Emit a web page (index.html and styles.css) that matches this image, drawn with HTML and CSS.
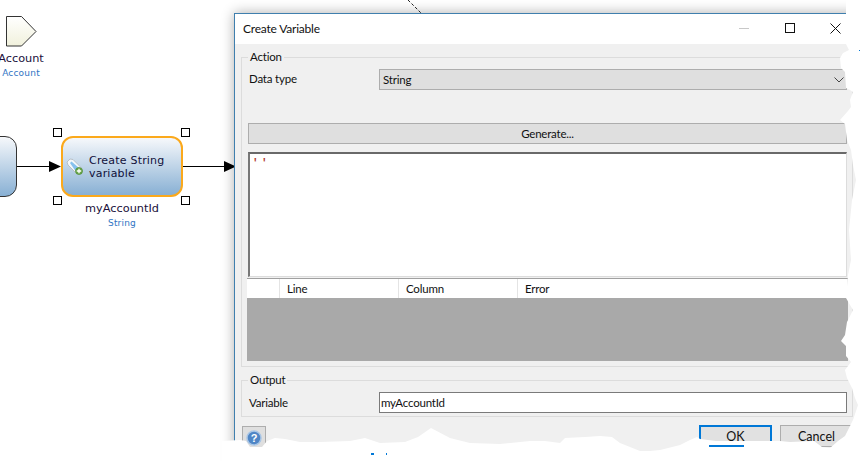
FILE: index.html
```html
<!DOCTYPE html>
<html lang="en">
<head>
<meta charset="utf-8">
<title>Create Variable</title>
<link rel="stylesheet" href="styles.css">
</head>
<body>
<main class="canvas">
  <svg class="wires" width="867" height="461" viewBox="0 0 867 461" aria-hidden="true">
    <defs>
      <linearGradient id="paleFill" x1="0" y1="0" x2="0" y2="1">
        <stop offset="0" stop-color="#ffffff"/><stop offset="1" stop-color="#f1f1dc"/>
      </linearGradient>
    </defs>
    <path d="M6.500 16.500H21.500L36 31.500L21.500 46H6.500Z" fill="url(#paleFill)" stroke="#333"/>
    <path d="M16 166.500H50M182 166.500H225" fill="none" stroke="#000"/>
    <path d="M49 161L61 166.500L49 172ZM224 161L236 166.500L224 172Z" fill="#000"/>
    <path d="M408 0L421 13" fill="none" stroke="#222" stroke-dasharray="3 2"/>
  </svg>

  <div class="node node-prev"></div>
  <div class="node node-current">
    <svg class="tag" width="18" height="18" viewBox="0 0 18 18" aria-hidden="true">
      <path d="M1 4L4 1L7 1.500L15 9.500L10 15L2 7Z" fill="#f4f7fa" stroke="#aeb6bd" stroke-width=".8"/>
      <path d="M4 5L5.500 3.500L13 10L9.500 13Z" fill="#86c1ee"/>
      <circle cx="13" cy="13" r="3.500" fill="#6aa84a" stroke="#4d8a34" stroke-width=".7"/>
      <path d="M13 10.800V15.200M10.800 13H15.200" stroke="#fff" stroke-width="1.300"/>
    </svg>
    <span class="node-label">Create String<br>variable</span>
  </div>
  <span class="handle h-tl"></span>
  <span class="handle h-tr"></span>
  <span class="handle h-bl"></span>
  <span class="handle h-br"></span>

  <div class="caption cap-account"><span class="cap-name">Account</span><span class="cap-type">Account</span></div>
  <div class="caption cap-var"><span class="cap-name">myAccountId</span><span class="cap-type">String</span></div>

  <section class="dialog">
    <header class="titlebar">
      <h1 class="title">Create Variable</h1>
      <div class="win-controls">
        <span class="win-min"></span>
        <span class="win-max"></span>
        <svg class="win-close" width="11" height="11" viewBox="0 0 11 11" aria-hidden="true"><path d="M.5 .5L10.500 10.500M10.500 .5L.5 10.500" stroke="#111" stroke-width="1"/></svg>
      </div>
    </header>
    <div class="dialog-body">
      <fieldset class="group group-action">
        <legend class="group-title">Action</legend>
        <div class="field-row">
          <label class="field-label">Data type</label>
          <div class="select">String
            <svg class="chev" width="10" height="6" viewBox="0 0 10 6" aria-hidden="true"><path d="M.5 .5L5 5L9.500 .5" fill="none" stroke="#444"/></svg>
          </div>
        </div>
        <button class="generate" type="button">Generate...</button>
        <div class="editor"><span class="quote">''</span></div>
        <div class="grid">
          <div class="grid-head">
            <span class="col col-0"></span>
            <span class="col col-line">Line</span>
            <span class="col col-column">Column</span>
            <span class="col col-error">Error</span>
          </div>
          <div class="grid-empty"></div>
        </div>
      </fieldset>
      <fieldset class="group group-output">
        <legend class="group-title">Output</legend>
        <div class="field-row">
          <label class="field-label">Variable</label>
          <div class="input">myAccountId</div>
        </div>
      </fieldset>
      <footer class="footer">
        <button class="help" type="button" aria-label="Help">
          <svg width="18" height="18" viewBox="0 0 18 18" aria-hidden="true">
            <circle cx="9" cy="9" r="7" fill="#4f86c6" stroke="#a9c6e6" stroke-width="1.500"/>
            <text x="9" y="13" class="help-mark">?</text>
          </svg>
        </button>
        <div class="actions">
          <button class="btn btn-ok" type="button">OK</button>
          <button class="btn" type="button">Cancel</button>
        </div>
      </footer>
    </div>
  </section>

  <svg class="tear" width="867" height="461" viewBox="0 0 867 461" aria-hidden="true">
    <path fill="#fff" d="M846 0L846 44L849 50L843 53L840 58L841 68L845 72L846 88L850 90L853 92L850 100L851 107L848 111L840 120L845 124L847 140L851 150L853 165L856 180L852 200L849 230L851 260L848 275L846 298L853 310L847 322L845 335L841 341L846 346L846 356L851 362L845 370L847 378L852 388L855 398L858 405L853 420L849 428L845 436L838 441L830 448L822 447L814 441L790 442L780 441L770 441L745 441L716 441L700 439L697 437L690 440L680 445L660 450L650 451L640 451L630 447L620 443L612 437L600 436L585 437L565 438L560 443L545 441L530 441L500 444L470 443L450 438L431 428L418 437L405 442L380 443L365 438L350 441L320 442L300 442L285 439L275 438L267 441L262 447L250 447L246 441L240 440L222 441L222 461L867 461L867 0Z"/>
    <path fill="#0078d7" d="M859 50h1v1h-1zM371 453h3v2h-3zM386 453h1v2h-1zM709 445h35v2h-35z"/>
  </svg>
</main>
</body>
</html>
```
FILE: styles.css
```css
* { box-sizing: border-box; }
html, body { margin: 0; padding: 0; background: #fff; }
.canvas {
  position: relative;
  width: 867px;
  height: 461px;
  overflow: hidden;
  font-family: "Lato", "Open Sans", sans-serif;
  font-size: 11.500px;
  letter-spacing: -.2px;
  color: #111;
}
.wires { position: absolute; left: 0; top: 0; }
.node {
  position: absolute;
  top: 136px;
  height: 61px;
  border-radius: 12px;
  background: linear-gradient(#f6f8fb, #88b0d4);
}
.node-prev { left: -60px; width: 77px; border: 1px solid #333; }
.node-current {
  left: 61px;
  width: 122px;
  border: 2px solid #fba91c;
  display: flex;
  align-items: center;
  padding-left: 3px;
  gap: 5px;
}
.node-label {
  font-family: "DejaVu Sans", sans-serif;
  font-size: 11px;
  letter-spacing: .2px;
  line-height: 13px;
  color: #10103a;
}
.tag { flex: none; }
.handle {
  position: absolute;
  width: 9px;
  height: 9px;
  border: 1px solid #000;
  background: #fff;
}
.h-tl { left: 53px; top: 128px; }
.h-tr { left: 181px; top: 128px; }
.h-bl { left: 53px; top: 196px; }
.h-br { left: 181px; top: 196px; }
.caption {
  position: absolute;
  display: flex;
  flex-direction: column;
  align-items: center;
  font-family: "DejaVu Sans", sans-serif;
  letter-spacing: 0;
  white-space: nowrap;
}
.cap-account { left: -9px; width: 60px; top: 52px; }
.cap-var { left: 82px; width: 80px; top: 202px; }
.cap-name { font-size: 11.300px; line-height: 14px; color: #20103a; }
.cap-type { font-size: 9px; line-height: 14px; color: #2f74c4; letter-spacing: .2px; }

.dialog {
  position: absolute;
  left: 234px;
  top: 13px;
  width: 626px;
  height: 470px;
  border: 1px solid #3f7fae;
  background: #f0f0f0;
  box-shadow: 0 0 12px rgba(0, 0, 0, .32);
  display: flex;
  flex-direction: column;
}
.titlebar {
  flex: none;
  height: 30px;
  padding: 0 0 2px 8px;
  background: #fff;
  display: flex;
  align-items: center;
}
.title { margin: 0; width: 90px; flex: none; font-size: 12px; font-weight: 400; color: #111; white-space: nowrap; }
.win-controls { display: flex; align-items: center; margin-left: 406px; }
.win-min { width: 10px; height: 1px; background: #c8c8c8; margin-right: 36px; }
.win-max { width: 10px; height: 10px; border: 1px solid #111; margin-right: 35px; }
.win-close { display: block; }
.dialog-body { flex: 1; padding: 5px 6px 0; display: flex; flex-direction: column; }
.group {
  margin: 0;
  min-width: 0;
  border: 1px solid #dcdcdc;
  padding: 4px 5px 5px 6px;
}
.group-title { padding: 0 2px; margin-left: 0; line-height: 16px; color: #111; }
.group-output { margin-top: 5px; padding-bottom: 3px; }
.field-row { display: flex; align-items: center; }
.field-label { width: 131px; padding-left: 1px; position: relative; }
.group-action .field-label { top: -1px; }
.select {
  flex: 1;
  height: 21px;
  line-height: 20px;
  padding-left: 3px;
  background: #dfdfdf;
  border: 1px solid #adadad;
  position: relative;
}
.chev { position: absolute; right: 2px; top: 7px; }
.input {
  flex: 1;
  height: 21px;
  line-height: 19px;
  padding-left: 1px;
  background: #fff;
  border: 1px solid #7a7a7a;
}
.generate {
  display: block;
  width: 100%;
  height: 21px;
  margin-top: 33px;
  padding: 0;
  font: inherit;
  letter-spacing: inherit;
  color: #111;
  background: #dfdfdf;
  border: 1px solid #adadad;
}
.editor {
  height: 125px;
  margin-top: 8px;
  background: #fff;
  border-top: 2px solid #696969;
  border-left: 2px solid #777;
  border-right: 1px solid #dcdcdc;
  border-bottom: 1px solid #dcdcdc;
  padding-left: 2px;
  line-height: 16px;
}
.quote {
  color: #b5392b;
  font-family: "Liberation Mono", monospace;
  font-size: 11px;
  font-weight: 700;
  letter-spacing: 2.400px;
}
.grid { margin: 1px -1px 0 -1px; height: 83px; display: flex; flex-direction: column; }
.grid-head {
  height: 20px;
  display: grid;
  grid-template-columns: 33px 119px 119px 1fr;
  background: #fff;
  border-top: 1px solid #a0a0a0;
}
.col {
  line-height: 20px;
  padding-left: 7px;
  border-right: 1px solid #e4e4e4;
}
.grid-empty { flex: 1; background: #a9a9a9; }
.footer {
  display: flex;
  justify-content: space-between;
  align-items: flex-start;
  padding-top: 8px;
}
.help {
  width: 24px;
  height: 24px;
  margin: 1px 0 0 1px;
  padding: 2px;
  background: #dfdfdf;
  border: 1px solid #adadad;
}
.help svg { display: block; }
.help-mark { fill: #fff; font-size: 11px; font-weight: 700; text-anchor: middle; }
.actions { display: flex; gap: 8px; }
.btn {
  width: 73px;
  height: 22px;
  padding: 0;
  font: inherit;
  font-size: 12.500px;
  color: #111;
  background: #e1e1e1;
  border: 1px solid #adadad;
}
.btn-ok { border: 2px solid #0078d7; }
.tear { position: absolute; left: 0; top: 0; }
```
